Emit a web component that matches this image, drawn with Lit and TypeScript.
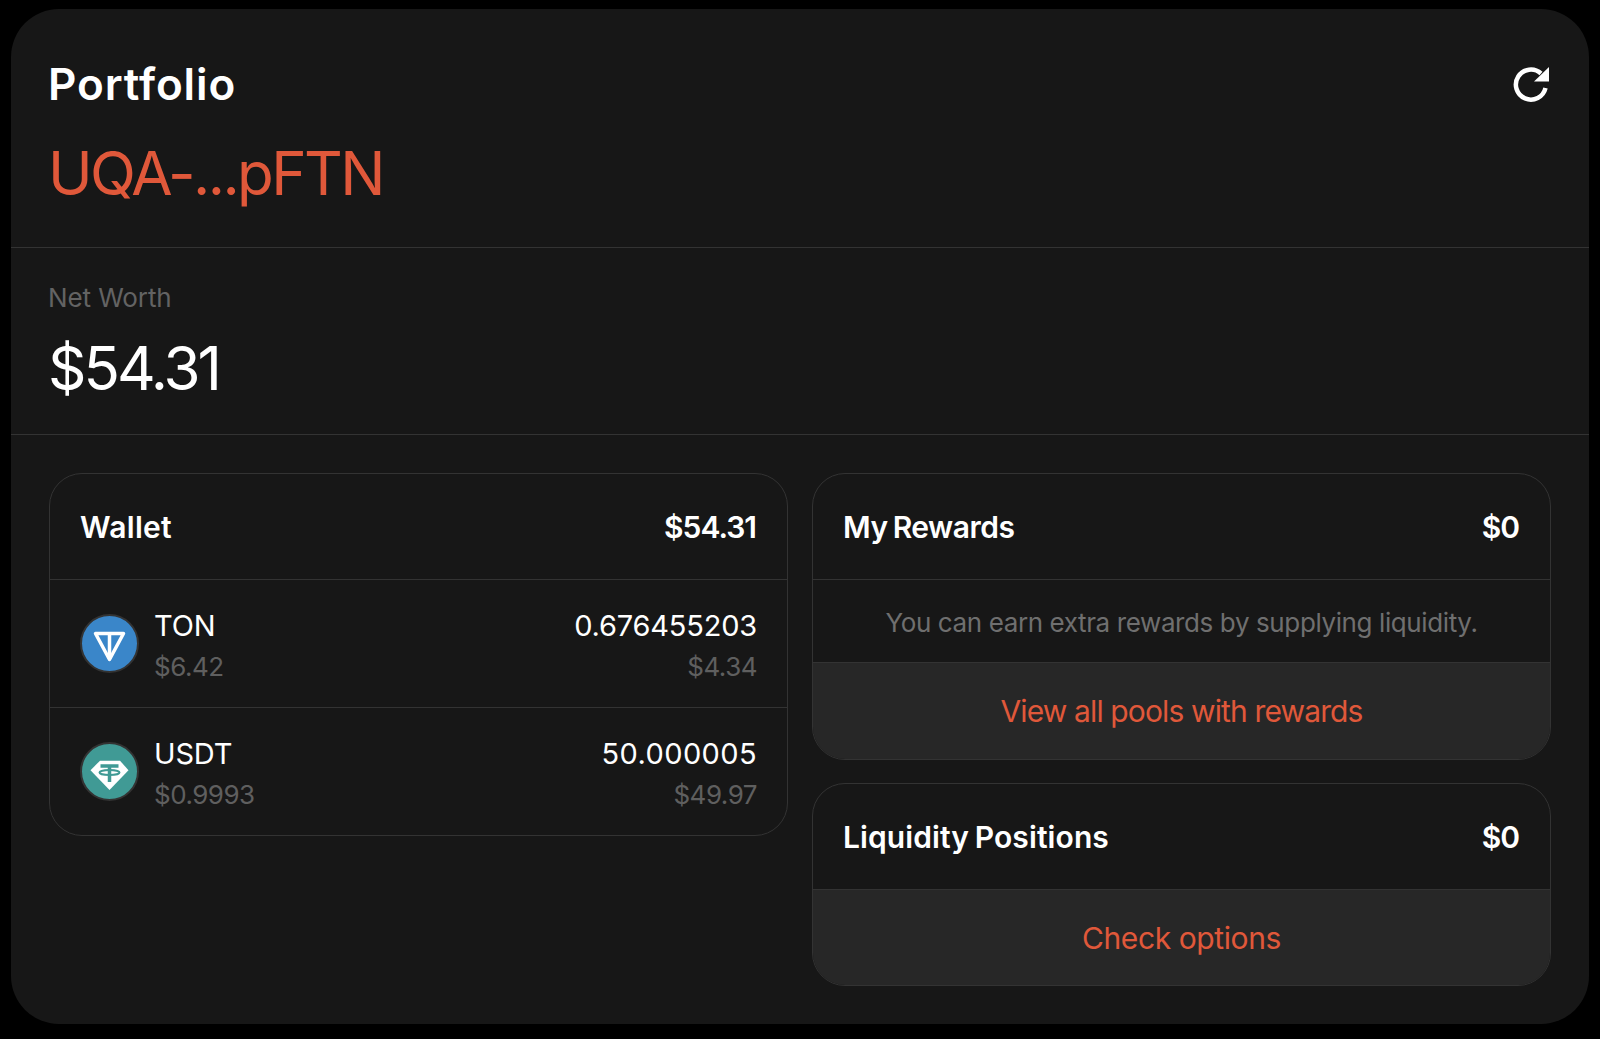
import { LitElement, html, css } from "lit";
import { customElement } from "lit/decorators.js";

@customElement("app-root")
export class AppRoot extends LitElement {
  static styles = css`
    :host { display: block; width: 1600px; height: 1039px; background: #000; box-sizing: border-box; padding: 9px 11px 15px 11px; font-family: Inter, "Noto Sans", sans-serif; color: #fff; }
    .panel { height: 1015px; background: #171717; border-radius: 48px; display: flex; flex-direction: column; overflow: hidden; box-sizing: border-box; }
    .head { padding: 47px 38px 0 37px; height: 239px; box-sizing: border-box; border-bottom: 1px solid #333; flex: none; }
    .row { display: flex; justify-content: space-between; align-items: center; }
    .title { font-size: 44px; font-weight: 600; line-height: 56px; letter-spacing: 0.9px; }
    .refresh { margin-right: 2px; flex: none; }
    .addr { font-size: 60px; line-height: 80px; color: #e0583a; margin-top: 21px; letter-spacing: -2.6px; }
    .net { height: 187px; flex: none; box-sizing: border-box; padding: 34px 38px 0 37px; border-bottom: 1px solid #333; }
    .netl { font-size: 26px; color: #636363; line-height: 32px; letter-spacing: -0.1px; }
    .netv { font-size: 60px; line-height: 76px; margin-top: 16px; letter-spacing: -3px; }
    .grid { display: grid; grid-template-columns: 739px 739px; gap: 24px; padding: 38px 38px 0; align-items: start; }
    .col { display: flex; flex-direction: column; gap: 23px; }
    .card { border: 1px solid #333; border-radius: 33px; overflow: hidden; }
    .chead { height: 105px; box-sizing: border-box; padding: 0 31px 0 30px; display: flex; justify-content: space-between; align-items: center; font-size: 30px; font-weight: 600; word-spacing: -2px; }
    .wide { letter-spacing: 0.3px; }
    .tight { letter-spacing: -0.5px; }
    .lp { letter-spacing: 0.1px; }
    .val { letter-spacing: -1px; }
    .asset { height: 128px; box-sizing: border-box; border-top: 1px solid #333; padding: 0 30px; display: flex; align-items: center; justify-content: space-between; }
    .left { display: flex; align-items: center; gap: 15px; }
    .logo { width: 59px; height: 59px; flex: none; }
    .info { padding-top: 4px; }
    .t1 { font-size: 29px; line-height: 40px; letter-spacing: -0.2px; }
    .t1.wd { letter-spacing: 0.4px; }
    .t2 { font-size: 26px; line-height: 36px; color: #5f5f5f; margin-top: 3px; letter-spacing: -0.5px; }
    .right { text-align: right; }
    .msg { height: 83px; box-sizing: border-box; padding-top: 3px; border-top: 1px solid #333; display: flex; align-items: center; justify-content: center; font-size: 26px; color: #6f6f6f; letter-spacing: -0.39px; }
    .cta { background: #272727; border-top: 1px solid #333; display: flex; align-items: center; justify-content: center; font-size: 30px; color: #e0583a; }
    .cta.a { height: 96px; letter-spacing: -0.87px; }
    .cta.b { height: 95px; letter-spacing: -0.4px; }
  `;
  render() {
    return html`
      <div class="panel">
        <div class="head">
          <div class="row"><div class="title">Portfolio</div>
            <svg class="refresh" width="36" height="36" viewBox="0 0 36 36" fill="none"><path d="M28 7.500A15 15 0 1 0 32.500 22" stroke="#fff" stroke-width="4.500"/><path d="M36 1V15.500H21z" fill="#fff"/></svg>
          </div>
          <div class="addr">UQA-...pFTN</div>
        </div>
        <div class="net">
          <div class="netl">Net Worth</div>
          <div class="netv">$54.31</div>
        </div>
        <div class="grid">
          <div class="card">
            <div class="chead"><span class="wide">Wallet</span><span class="val">$54.31</span></div>
            <div class="asset">
              <div class="left">
                <svg class="logo" viewBox="0 0 59 59"><circle cx="29.500" cy="29.500" r="28.500" fill="#3a86c9" stroke="#333" stroke-width="2"/><path d="M15.500 19.500h28L29.500 45.500z" fill="none" stroke="#fff" stroke-width="3.500" stroke-linejoin="round"/><path d="M29.500 20v25" stroke="#fff" stroke-width="3.500"/></svg>
                <div class="info"><div class="t1">TON</div><div class="t2">$6.42</div></div>
              </div>
              <div class="right info"><div class="t1">0.676455203</div><div class="t2">$4.34</div></div>
            </div>
            <div class="asset">
              <div class="left">
                <svg class="logo" viewBox="0 0 59 59"><circle cx="29.500" cy="29.500" r="28.500" fill="#409a95" stroke="#333" stroke-width="2"/><path d="M20 18.700h20l8.500 9.500-19 19.800-19-19.800z" fill="#fff"/><path d="M20.500 24h18M29.500 24v16" stroke="#409a95" stroke-width="3.500" fill="none"/><ellipse cx="29.500" cy="30.500" rx="10" ry="2.500" fill="none" stroke="#409a95" stroke-width="2"/></svg>
                <div class="info"><div class="t1">USDT</div><div class="t2">$0.9993</div></div>
              </div>
              <div class="right info"><div class="t1 wd">50.000005</div><div class="t2">$49.97</div></div>
            </div>
          </div>
          <div class="col">
            <div class="card">
              <div class="chead"><span class="tight">My Rewards</span><span class="val">$0</span></div>
              <div class="msg">You can earn extra rewards by supplying liquidity.</div>
              <div class="cta a">View all pools with rewards</div>
            </div>
            <div class="card">
              <div class="chead"><span class="lp">Liquidity Positions</span><span class="val">$0</span></div>
              <div class="cta b">Check options</div>
            </div>
          </div>
        </div>
      </div>
    `;
  }
}
